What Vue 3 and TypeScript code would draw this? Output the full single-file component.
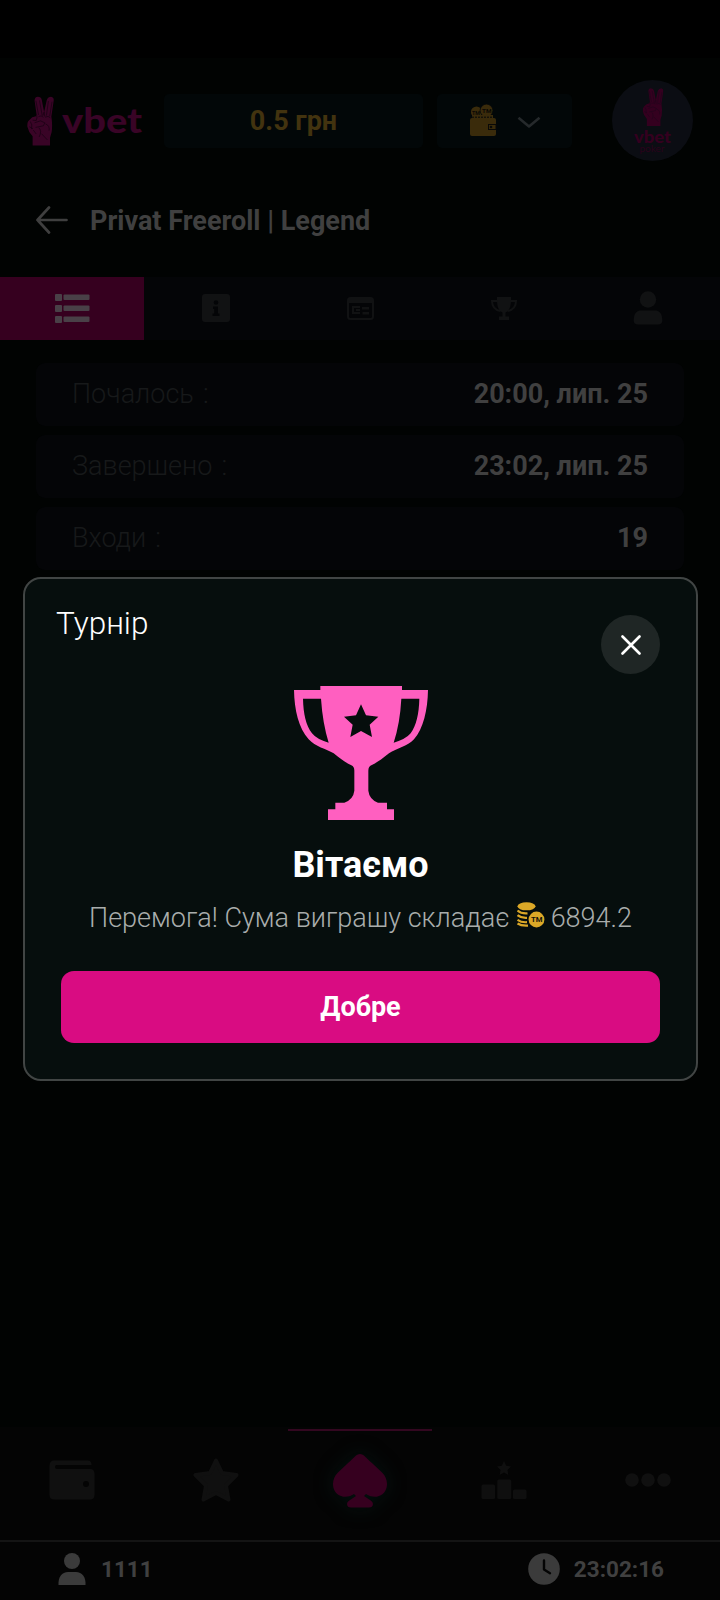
<script setup lang="ts">
interface InfoRow {
  label: string
  value: string
}

const balance = '0.5 грн'
const title = 'Privat Freeroll | Legend'
const rows: InfoRow[] = [
  { label: 'Почалось :', value: '20:00, лип. 25' },
  { label: 'Завершено :', value: '23:02, лип. 25' },
  { label: 'Входи :', value: '19' },
]
const online = '1111'
const clock = '23:02:16'
const prize = '6894.2'

const handShape =
  'M97 286V258Q84 244 81 228Q80 213 88 208Q96 197 106 198L109 192L103 150Q103 138 113 138Q123 138 125 148L132 184L140 148Q144 138 153 138Q163 140 161 151L154 198Q158 222 155 245L150 262V286Z'
const handLines =
  'M109 192Q112 202 108 210L97 209M107 150L115 193M118 149L126 194M128 196L132 184L134 198M145 151L139 195M156 153L149 197M90 213Q97 222 94 236M103 217L121 211L134 217L130 226L106 231M115 198Q123 193 130 200M135 200Q145 194 151 202M116 232Q126 242 117 260M136 220Q150 226 147 241M99 239L108 251M124 250L142 269M87 229L98 235'
</script>

<template>
  <div class="screen">
    <div class="status-bar"></div>
    <header class="header">
      <div class="brand">
        <svg class="brand-hand" viewBox="80 137 82 149">
          <path :d="handShape" fill="#390426" />
          <path :d="handLines" fill="none" stroke="#130210" stroke-width="2" />
        </svg>
        <svg class="brand-name" viewBox="0 0 82 50">
          <text x="0" y="37" textLength="80" lengthAdjust="spacingAndGlyphs">vbet</text>
        </svg>
      </div>
      <div class="balance">{{ balance }}</div>
      <div class="wallet">
        <svg width="28" height="33" viewBox="0 0 28 33">
          <circle cx="7.5" cy="8" r="5.6" fill="#3a2b0b" />
          <circle cx="17.5" cy="6.5" r="6.4" fill="#3a2b0b" stroke="#05080a" stroke-width=".8" />
          <path d="M3 11h21v3H3z" fill="#3a2b0b" />
          <path d="M3 13.2h21" stroke="#05080a" stroke-width="1" stroke-dasharray="2 1" />
          <rect x="1" y="14" width="26" height="18" rx="2" fill="#3a2b0b" />
          <rect x="19.5" y="20.5" width="7.5" height="5" fill="none" stroke="#090908" />
          <circle cx="22" cy="23" r="1.3" fill="#090908" />
          <text x="13" y="9" textLength="9.5" lengthAdjust="spacingAndGlyphs" class="coin-text">TM</text>
          <text x="3" y="10.5" textLength="8" lengthAdjust="spacingAndGlyphs" class="coin-text small">TM</text>
        </svg>
        <svg class="chevron" width="24" height="14" viewBox="0 0 24 14">
          <path d="M1.5 1.8 12 10.5 22.5 1.8" fill="none" stroke="#25292b" stroke-width="2.6" stroke-linejoin="round" />
        </svg>
      </div>
      <div class="avatar">
        <svg width="81" height="81" viewBox="0 0 81 81">
          <svg x="30.500" y="7.500" width="21" height="39" viewBox="80 137 82 149">
            <path :d="handShape" fill="#34001f" />
            <path :d="handLines" fill="none" stroke="#20051a" stroke-width="2.5" />
          </svg>
          <text x="22" y="63" textLength="37" lengthAdjust="spacingAndGlyphs" class="avatar-name">vbet</text>
          <text x="27.500" y="71.500" textLength="25" lengthAdjust="spacingAndGlyphs" class="avatar-sub">poker</text>
        </svg>
      </div>
    </header>

    <div class="title-row">
      <svg class="back" width="33" height="28" viewBox="0 0 33 28">
        <path d="M13 1.5 1.5 14 13 26.500M1.500 14H30.500" fill="none" stroke="#3f3f3f" stroke-width="2.7" stroke-linecap="round" stroke-linejoin="round" />
      </svg>
      <h1>{{ title }}</h1>
    </div>

    <nav class="tabs">
      <div class="tab active">
        <svg class="list" width="36" height="30" viewBox="0 0 36 30" fill="#494047">
          <rect x="1" y="1" width="7" height="7" rx="1" />
          <rect x="9.500" y="1.500" width="26" height="5.500" rx="1" />
          <rect x="1" y="12" width="7" height="7" rx="1" />
          <rect x="9.500" y="12.500" width="26" height="5.500" rx="1" />
          <rect x="1" y="23" width="7" height="7" rx="1" />
          <rect x="9.500" y="23.500" width="26" height="5.500" rx="1" />
        </svg>
      </div>
      <div class="tab">
        <svg width="28" height="28" viewBox="0 0 28 28">
          <rect width="28" height="28" rx="3" fill="#111213" />
          <circle cx="14" cy="8.500" r="2.300" fill="#040507" />
          <path d="M11 12.500h5v7h1.500v2.500h-7v-2.500h1.700V15H11z" fill="#040507" />
        </svg>
      </div>
      <div class="tab">
        <svg width="27" height="23" viewBox="0 0 27 23">
          <rect x="1" y="1" width="25" height="21" rx="2.500" fill="none" stroke="#111213" stroke-width="2" />
          <path d="M1 1h25v5H1zM5 9h8v2H5zM5 9h2v8H5zM5 15h8v2H5zM9 12h4v2H9zM15 10h7v2.500h-7zM15.500 15h6.500v2.500h-6.500z" fill="#111213" />
        </svg>
      </div>
      <div class="tab">
        <svg width="28" height="24" viewBox="0 0 28 24">
          <path d="M8 5H2C2 11 5 14 10.500 15M20 5h6c0 6-3 9-8.500 10" fill="none" stroke="#111213" stroke-width="2" />
          <path d="M7 1h14v3c0 7-2 11-5.500 12.500v4H19V24H9v-3.500h3.500v-4C9 15 7 11 7 4z" fill="#111213" />
        </svg>
      </div>
      <div class="tab">
        <svg width="30" height="34" viewBox="0 0 30 34" fill="#111213">
          <circle cx="15" cy="8.500" r="8.200" />
          <path d="M.700 29.500C.700 22 4 19.500 8 19.500H22C26 19.500 29.300 22 29.300 29.500Q29.300 33.500 25 33.500H5Q.700 33.500.700 29.500Z" />
        </svg>
      </div>
    </nav>

    <main class="content">
      <div v-for="row in rows" :key="row.label" class="info-row">
        <span class="label">{{ row.label }}</span>
        <span class="value">{{ row.value }}</span>
      </div>
    </main>

    <nav class="bottom-nav">
      <div class="nav-item">
        <svg width="46" height="40" viewBox="0 0 46 40">
          <path d="M5 .500H39Q42.500.500 42.500 5H7.500Q6 5 6 7t2 2H41Q45.500 9 45.500 14V35Q45.500 39.500 41 39.500H5.500Q.500 39.500.500 35V6Q.500.500 5 .500Z" fill="#101010" />
          <circle cx="37" cy="24" r="3" fill="#040404" />
        </svg>
      </div>
      <div class="nav-item">
        <svg width="46" height="44" viewBox="0 0 46 44">
          <path d="M23 2.500 29 15 43.500 17 33 27.500 35.500 41.500 23 35 10.500 41.500 13 27.500 2.500 17 17 15Z" fill="#101010" stroke="#101010" stroke-width="4" stroke-linejoin="round" />
        </svg>
      </div>
      <div class="nav-item current">
        <svg class="spade" width="56" height="56" viewBox="0 0 56 56">
          <path d="M28 1C32 1 34 5 40 10L50 19.500C58 27 56 40 47 43C42 45 37 43 34 41L32 43L38 47C43 50 41 54.500 37 54.500H19C15 54.500 13 50 18 47L24 43L22 41C19 43 14 45 9 43C0 40-2 27 6 19.500L16 10C22 5 24 1 28 1Z" fill="#36001f" />
        </svg>
      </div>
      <div class="nav-item">
        <svg width="46" height="38" viewBox="0 0 46 38" fill="#0f0f0f">
          <path d="M23 0 25.200 4.800 30 5.500 26.500 9 27.300 14 23 11.600 18.700 14 19.500 9 16 5.500 20.800 4.800Z" />
          <rect x=".500" y="23.500" width="13.500" height="14.500" rx="1.500" />
          <rect x="16.300" y="18.500" width="14" height="19.500" rx="1.500" />
          <rect x="32" y="28.500" width="13.500" height="9.500" rx="1.500" />
        </svg>
      </div>
      <div class="nav-item">
        <svg width="46" height="14" viewBox="0 0 46 14" fill="#101010">
          <circle cx="7" cy="7" r="6.800" />
          <circle cx="23" cy="7" r="6.800" />
          <circle cx="39" cy="7" r="6.800" />
        </svg>
      </div>
    </nav>

    <footer class="footer">
      <div class="foot-group">
        <svg width="28" height="32" viewBox="0 0 28 32" fill="#3b3b3b">
          <circle cx="14" cy="8" r="8" />
          <path d="M.500 32C0 24 4 19 10 19H18C24 19 28 24 27.500 32Z" />
        </svg>
        <span class="online">{{ online }}</span>
      </div>
      <div class="foot-group clock-group">
        <svg width="32" height="32" viewBox="0 0 32 32">
          <circle cx="16" cy="16" r="15.800" fill="#3b3b3b" />
          <path d="M16 7.500V16.500L22 20.200" fill="none" stroke="#040404" stroke-width="2.400" stroke-linecap="round" stroke-linejoin="round" />
        </svg>
        <span class="clock">{{ clock }}</span>
      </div>
    </footer>

    <section class="modal" role="dialog">
      <div class="modal-head">
        <h2>Турнір</h2>
        <button class="close" aria-label="Закрити">
          <svg width="20" height="20" viewBox="0 0 20 20">
            <path d="M1.500 1.500 18.500 18.500M18.500 1.500 1.500 18.500" stroke="#fff" stroke-width="2.600" stroke-linecap="round" />
          </svg>
        </button>
      </div>
      <svg class="trophy" viewBox="162 48 402 402">
        <path
          fill="#ff5fc0"
          fill-rule="evenodd"
          d="M241 48H486V60H564C563 120 550 176 522 208C502 230 470 235 447 250C426 267 411 278 394 286Q385 290 385 302V362Q388 388 414 398H441V418H462V450H264V418H286V398H313Q340 388 343 362V302Q343 290 334 286C315 277 301 266 281 250C258 237 226 230 206 208C176 174 163 120 162 60H241ZM189 86C190 132 198 166 216 190Q230 208 266 218Q248 160 243 86ZM484 86Q480 160 461 218Q497 208 512 190C529 166 537 132 538 86ZM363 103 348 136 312 140 338 164 331 201 363 183 396 201 389 164 415 140 378 136Z"
        />
      </svg>
      <h3>Вітаємо</h3>
      <p class="message">
        <span class="message-text">Перемога! Сума виграшу складає</span>
        <svg class="coins" width="28" height="26" viewBox="0 0 28 26">
          <ellipse cx="9.500" cy="4.300" rx="9" ry="4" fill="#dba827" />
          <path d="M.500 8.500Q4 11.800 10.500 11.300M.500 13.200Q4 16.200 10 15.800M.500 17.800Q4 20.600 10 20.200M.500 21.500Q4 24 11 23.600" fill="none" stroke="#dba827" stroke-width="2.200" />
          <circle cx="19.500" cy="17.500" r="8.800" fill="#060e0d" />
          <circle cx="19.500" cy="17.500" r="7.900" fill="#dba827" />
          <text x="14" y="20.300" textLength="11.500" lengthAdjust="spacingAndGlyphs">TM</text>
        </svg>
        <span class="prize">{{ prize }}</span>
      </p>
      <button class="ok">Добре</button>
    </section>
  </div>
</template>

<style>
body {
  margin: 0;
  background: #000;
}
</style>

<style scoped>
* {
  box-sizing: border-box;
}
h1,
h2,
h3,
p {
  margin: 0;
}
svg {
  display: block;
  flex: none;
}
button {
  border: 0;
  padding: 0;
  font-family: inherit;
}
.screen {
  position: relative;
  display: flex;
  flex-direction: column;
  width: 720px;
  height: 1600px;
  overflow: hidden;
  background: #010302;
  color: #404040;
  font-family: Roboto, 'Liberation Sans', sans-serif;
}
.status-bar {
  height: 58px;
  background: #000;
}
.header {
  display: flex;
  align-items: center;
  height: 125px;
  padding: 0 27px;
}
.brand {
  display: flex;
  align-items: center;
  width: 137px;
  gap: 8px;
}
.brand-hand {
  width: 27px;
  height: 50px;
}
.brand-name {
  width: 82px;
  height: 50px;
  overflow: visible;
}
.brand-name text {
  font: 900 35px Lato, sans-serif;
  fill: #390426;
}
.balance,
.wallet {
  display: flex;
  align-items: center;
  justify-content: center;
  height: 54px;
  border-radius: 5px;
  background: #020708;
}
.balance {
  width: 259px;
  color: #42330f;
  font-size: 27px;
  font-weight: 700;
}
.wallet {
  width: 135px;
  margin-left: 14px;
  gap: 20px;
}
.chevron {
  margin-top: 4px;
}
.coin-text {
  font: 700 6px Roboto, sans-serif;
  fill: #0b0905;
}
.coin-text.small {
  font-size: 5px;
}
.avatar {
  width: 81px;
  height: 81px;
  margin-left: 40px;
  flex: none;
  border-radius: 50%;
  background: #0b0d13;
}
.avatar-name {
  font: 900 16px Lato, sans-serif;
  fill: #34001f;
}
.avatar-sub {
  font: 400 9px Lato, sans-serif;
  fill: #2a021b;
}
.title-row {
  display: flex;
  align-items: center;
  height: 75px;
  padding-left: 36px;
  gap: 21px;
}
.back {
  margin-top: -1px;
}
.title-row h1 {
  font-size: 27px;
  font-weight: 700;
}
.tabs {
  display: flex;
  height: 63px;
  margin-top: 19px;
  background: #040507;
}
.tab {
  display: flex;
  flex: 1;
  align-items: center;
  justify-content: center;
  padding-bottom: 1px;
}
.tab.active {
  background: #36001f;
}
.list {
  margin-top: -1px;
}
.content {
  display: flex;
  flex: 1;
  flex-direction: column;
  gap: 9px;
  padding: 22.500px 36px 0;
}
.info-row {
  display: flex;
  align-items: center;
  justify-content: space-between;
  height: 63px;
  padding: 0 36px;
  border-radius: 9px;
  background: #040507;
  font-size: 27px;
}
.label {
  color: #17191a;
  font-weight: 300;
  word-spacing: 2.500px;
}
.value {
  font-weight: 700;
}
.bottom-nav {
  display: flex;
  height: 113px;
  background: #040404;
}
.nav-item {
  display: flex;
  flex: 1;
  align-items: center;
  justify-content: center;
  padding-bottom: 7px;
}
.current {
  border-top: 2px solid #330720;
  margin-top: 2px;
  padding-bottom: 9px;
}
.spade {
  filter: drop-shadow(0 0 9px #03110f);
}
.footer {
  display: flex;
  align-items: center;
  justify-content: space-between;
  height: 60px;
  padding: 0 56px 4px 58px;
  border-top: 2px solid #141414;
  background: #040404;
  font-size: 22.500px;
  font-weight: 700;
}
.foot-group {
  display: flex;
  align-items: center;
  gap: 15px;
}
.clock-group {
  gap: 14px;
}
.modal {
  position: absolute;
  top: 577px;
  left: 23px;
  display: flex;
  flex-direction: column;
  align-items: center;
  width: 675px;
  height: 504px;
  border: 2px solid #414544;
  border-radius: 18px;
  background: #060e0d;
}
.modal-head {
  display: flex;
  align-items: flex-start;
  justify-content: space-between;
  width: 100%;
  padding: 27px 36px 0 31px;
}
.modal-head h2 {
  color: #fff;
  font-size: 31.500px;
  font-weight: 300;
  line-height: 36px;
}
.close {
  display: flex;
  align-items: center;
  justify-content: center;
  width: 59px;
  height: 59px;
  margin-top: 9px;
  border-radius: 50%;
  background: #1f2625;
}
.trophy {
  width: 134px;
  height: 134px;
  margin-top: 12px;
}
h3 {
  margin-top: 23px;
  color: #fff;
  font-size: 36px;
  font-weight: 700;
  line-height: 44px;
}
.message {
  display: flex;
  align-items: center;
  height: 36px;
  margin-top: 13px;
  color: #a9adac;
  font-size: 27px;
  font-weight: 300;
  white-space: nowrap;
}
.coins {
  margin: -6px 6px 0 7px;
}
.coins text {
  font: 700 7.500px Roboto, sans-serif;
  fill: #17140a;
}
.ok {
  width: 599px;
  height: 72px;
  margin-top: 35px;
  border-radius: 13px;
  background: #d90c82;
  color: #fff;
  font-size: 27px;
  font-weight: 700;
}
</style>
